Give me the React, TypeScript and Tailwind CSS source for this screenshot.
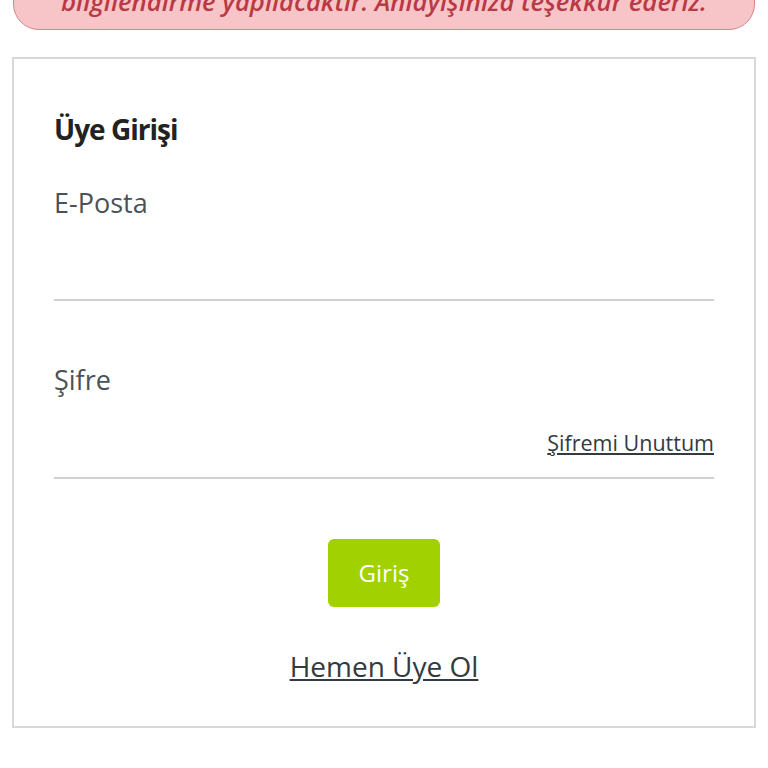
export default function App() {
  return (
    <div className="min-h-[768px] bg-white overflow-hidden" style={{ fontFamily: '"Open Sans", "Noto Sans", sans-serif' }}>
      {/* Notice banner, scrolled partly out of view */}
      <div className="mx-[13px] mt-[-17px] rounded-b-[26px] border border-[#d4858e] bg-[#f7c5c7] pb-[9px] text-center">
        <p className="text-[25.7px] leading-[36px] font-semibold italic text-[#b93a46] whitespace-nowrap">
          bilgilendirme yapılacaktır. Anlayışınıza teşekkür ederiz.
        </p>
      </div>

      {/* Login card */}
      <div className="mx-[12px] mt-[27px] border-2 border-[#d8d8d8] bg-white px-10 pt-[50px] pb-[41px]">
        <h2 className="text-[28px] leading-[40px] font-bold tracking-[-1px] text-[#222]">Üye Girişi</h2>

        <form className="mt-[36px]" onSubmit={(e) => e.preventDefault()}>
          <label className="block text-[27px] leading-[36px] text-[#4b5157]">E-Posta</label>
          <input
            type="email"
            className="block h-[80px] w-full border-b-2 border-[#d0d0d0] bg-transparent outline-none"
          />

          <label className="mt-[61px] block text-[27px] leading-[36px] text-[#4b5157]">Şifre</label>
          <div className="flex h-[81px] items-end justify-end border-b-2 border-[#d0d0d0] pb-[20px]">
            <a href="#" className="text-[21.5px] leading-[28px] text-[#333a40] underline">
              Şifremi Unuttum
            </a>
          </div>

          <div className="mt-[60px] flex justify-center">
            <button
              type="submit"
              className="h-[68px] w-[112px] rounded-[6px] bg-[#a1d100] text-[24px] text-white"
            >
              Giriş
            </button>
          </div>

          <div className="mt-[40px] text-center">
            <a href="#" className="text-[28px] leading-[38px] text-[#333a40] underline">
              Hemen Üye Ol
            </a>
          </div>
        </form>
      </div>
    </div>
  );
}
